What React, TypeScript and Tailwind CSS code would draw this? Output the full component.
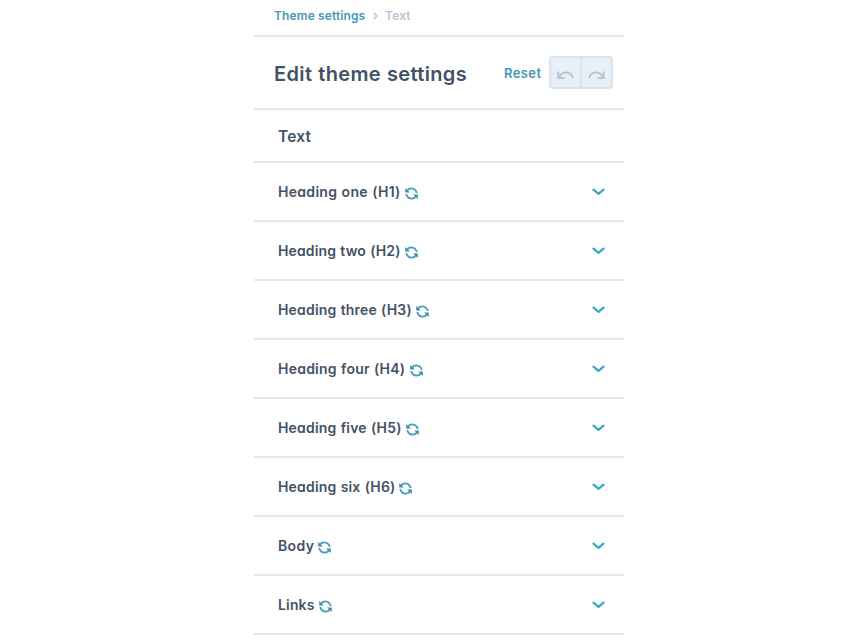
import { useState } from 'react';
import clsx from 'clsx';

interface Section {
  id: string;
  label: string;
  className: string;
}

const sections: Section[] = [
  { id: 'h1', label: 'Heading one (H1)', className: 'w-[123px] tracking-[0.3px] [word-spacing:0.5px]' },
  { id: 'h2', label: 'Heading two (H2)', className: 'w-[123px] tracking-[0.14px] [word-spacing:0.5px]' },
  { id: 'h3', label: 'Heading three (H3)', className: 'w-[134px] tracking-[0.18px] [word-spacing:0.5px]' },
  { id: 'h4', label: 'Heading four (H4)', className: 'w-[128px] tracking-[0.23px] [word-spacing:0.5px]' },
  { id: 'h5', label: 'Heading five (H5)', className: 'w-[124px] tracking-[0.18px] [word-spacing:0.5px]' },
  { id: 'h6', label: 'Heading six (H6)', className: 'w-[117px] tracking-[0.18px] [word-spacing:0.5px]' },
  { id: 'body', label: 'Body', className: 'w-[36px] tracking-[0.35px]' },
  { id: 'links', label: 'Links', className: 'w-[37px] tracking-[0.15px]' },
];

function RefreshIcon() {
  return (
    <svg viewBox="0 0 13 13" className="mt-[4px] ml-[4px] h-[13px] w-[13px] shrink-0" fill="none">
      <path d="M2.2 3.4C4.4 0.4 9.2 0.6 11 4C11.4 4.7 11.6 5.4 11.7 6.2" stroke="#4a9db8" strokeWidth="1.8" />
      <path d="M10.8 9.6C8.6 12.6 3.8 12.4 2 9C1.6 8.3 1.4 7.6 1.3 6.8" stroke="#4a9db8" strokeWidth="1.8" />
      <path d="M0.2 1V5.5H4.9Z" fill="#3c91ae" />
      <path d="M12.8 12V7.5H8.1Z" fill="#3c91ae" />
    </svg>
  );
}

function UndoIcon({ flipped = false }: { flipped?: boolean }) {
  return (
    <svg
      viewBox="0 0 17 10"
      className={clsx('mt-[4px] h-[10px] w-[17px]', flipped && '-scale-x-100')}
      fill="none"
      stroke="#b4c6d9"
      strokeWidth="2"
    >
      <path d="M1.2 1.6V7.9H7.4" />
      <path d="M2.4 7C5 1.2 13.6 0.6 15.8 8" />
    </svg>
  );
}

function Chevron({ open }: { open: boolean }) {
  return (
    <svg
      viewBox="0 0 13 8"
      className={clsx('h-[8px] w-[13px]', open && 'rotate-180')}
      fill="none"
      stroke="#39a9c0"
      strokeWidth="2.3"
      strokeLinecap="round"
      strokeLinejoin="round"
    >
      <path d="M1.5 1.7L6.5 5.8L11.5 1.7" />
    </svg>
  );
}

export default function App() {
  const [openId, setOpenId] = useState<string | null>(null);

  return (
    <div className="h-[642px] overflow-hidden bg-white font-['Inter',sans-serif] font-semibold text-[#425266] [font-feature-settings:'cv11']">
      <div className="ml-[254px] w-[370px]">
        <nav className="flex h-[37px] items-center border-b-2 border-[#e3e8ef] pb-[3px] pl-5 text-[12px] leading-4">
          <a className="w-[91px] whitespace-nowrap tracking-[0.12px] text-[#4698b1]">Theme settings</a>
          <svg viewBox="0 0 5 8" className="ml-[8px] h-[8px] w-[5px]" fill="none" stroke="#b4c4d5" strokeWidth="1.4">
            <path d="M0.8 0.8L4 4L0.8 7.2" />
          </svg>
          <span className="ml-[7px] tracking-[0.15px] text-[#b8c3d8]">Text</span>
        </nav>

        <header className="flex h-[73px] items-center border-b-2 border-[#e3e8ef] pl-5">
          <h1 className="w-[230px] whitespace-nowrap pt-[3px] text-[20px] leading-7 tracking-[0.36px] [word-spacing:0.5px]">
            Edit theme settings
          </h1>
          <button className="w-[45px] pt-[3px] text-left text-[13px] tracking-[0.4px] text-[#4698b1]">Reset</button>
          <div className="flex h-[33px] w-[64px] rounded-[4px] border-2 border-[#dae4ed] bg-[#e9eff6]">
            <button aria-label="Undo" className="flex w-[31px] items-center justify-center border-r-2 border-[#dae4ed]">
              <UndoIcon />
            </button>
            <button aria-label="Redo" className="flex w-[29px] items-center justify-center">
              <UndoIcon flipped />
            </button>
          </div>
        </header>

        <h2 className="flex h-[53px] items-center border-b-2 border-[#e3e8ef] pt-[2px] pl-6 text-[15.5px] tracking-[0.2px]">
          Text
        </h2>

        {sections.map(({ id, label, className }) => (
          <button
            key={id}
            onClick={() => setOpenId(openId === id ? null : id)}
            className="flex h-[59px] w-full items-center border-b-2 border-[#e3e8ef] pr-[19px] pl-6 text-left text-[14px]"
          >
            <span className={clsx('whitespace-nowrap', className)}>{label}</span>
            <RefreshIcon />
            <span className="ml-auto">
              <Chevron open={openId === id} />
            </span>
          </button>
        ))}
      </div>
    </div>
  );
}
